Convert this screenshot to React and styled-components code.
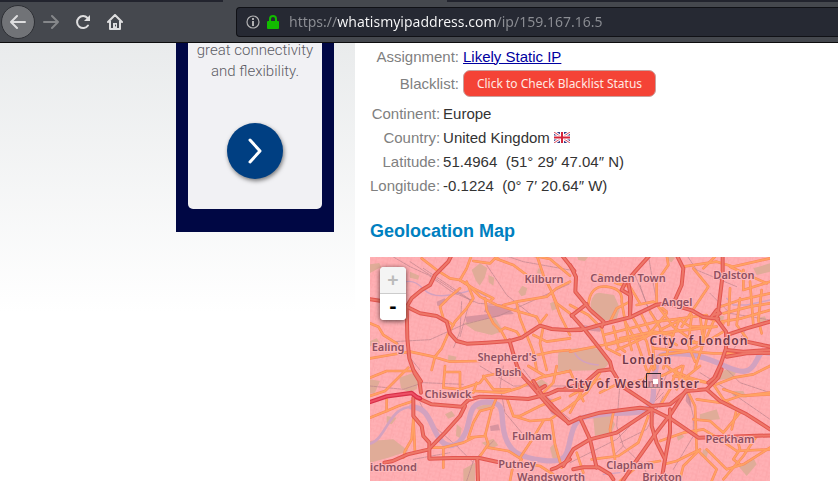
import React from "react";
import styled, { createGlobalStyle } from "styled-components";

const GlobalStyle = createGlobalStyle`
  * { box-sizing: border-box; }
  body {
    margin: 0;
    background: #fff;
    color: #333;
    font-family: "Liberation Sans", Arial, sans-serif;
    font-size: 15px;
  }
`;

const Window = styled.div`
  display: flex;
  flex-direction: column;
  height: 100vh;
  overflow: hidden;
`;

const TabStrip = styled.div`
  display: grid;
  grid-template-columns: 223px 224px 1fr;
  height: 2px;
  flex: none;
  background: #22242e;
`;

const ActiveTab = styled.div`
  grid-column: 2;
  background: #45484e;
`;

const Toolbar = styled.header`
  display: flex;
  align-items: center;
  flex: none;
  height: 41px;
  padding: 0 0 0 1px;
  background: #45484e;
  border-bottom: 1px solid #0c0c0d;
`;

const NavButtons = styled.nav`
  display: flex;
  align-items: center;
  width: 235px;
  flex: none;
`;

const ToolButton = styled.button`
  display: grid;
  place-items: center;
  width: 32px;
  height: 32px;
  padding: 0;
  border: 0;
  background: none;
  color: ${(p) => (p.disabled ? "#85878a" : "#dededf")};
`;

const BackButton = styled(ToolButton)`
  width: 34px;
  height: 34px;
  border: 1px solid #2d2f34;
  border-radius: 50%;
  background: #717377;
`;

const AddressBar = styled.div`
  display: flex;
  align-items: center;
  flex: 1;
  height: 30px;
  padding-left: 9px;
  border: 1px solid #101116;
  border-right: 0;
  border-radius: 4px 0 0 4px;
  background: #262933;
`;

const SiteInfo = styled.button`
  display: flex;
  align-items: center;
  gap: 7px;
  width: 43px;
  padding: 0;
  border: 0;
  background: none;
`;

const AddressInput = styled.input`
  flex: 1;
  min-width: 0;
  height: 26px;
  padding: 0;
  border: 0;
  outline: 0;
  font: 14px/26px "Noto Sans", sans-serif;
  color: transparent;
  background: linear-gradient(90deg, #8c8e94 48px, #f9f9fa 48px 207px, #8c8e94 207px);
  background-clip: text;
`;

const Page = styled.div`
  display: grid;
  grid-template-columns: 355px minmax(0, 1fr);
  flex: 1;
  min-height: 0;
  overflow: hidden;
`;

const Sidebar = styled.aside`
  padding-left: 176px;
  background: linear-gradient(#e9ebec, #fff 270px);
`;

const Banner = styled.div`
  width: 158px;
  padding: 0 12px 23px;
  background: #000744;
`;

const BannerCard = styled.div`
  display: flex;
  flex-direction: column;
  align-items: center;
  height: 166px;
  border-radius: 0 0 5px 5px;
  background: #f1f1f4;
`;

const BannerText = styled.p`
  width: 124px;
  margin: -3px 0 41px;
  color: #5c5c64;
  font: 300 15px/21px Roboto, sans-serif;
  text-align: center;
`;

const GoButton = styled.button`
  display: grid;
  place-items: center;
  width: 56px;
  height: 56px;
  padding: 0;
  border: 0;
  border-radius: 50%;
  background: #003f82;
  box-shadow: 1px 2px 4px rgba(0, 0, 0, 0.5);
`;

const Content = styled.main`
  display: flex;
  flex-direction: column;
  align-items: flex-start;
  padding: 0 15px;
`;

const Details = styled.table`
  border-collapse: collapse;
  margin-top: ${(p) => p.$top || 0}px;

  th, td { padding: 0; height: ${(p) => p.$row}px; line-height: 24px; }
  th {
    width: ${(p) => p.$label}px;
    color: #808080;
    font-weight: 400;
    text-align: right;
  }
  td { padding-left: ${(p) => p.$gap}px; white-space: pre; }
`;

const StaticLink = styled.a`
  color: #0000a0;
  text-decoration: underline;
`;

const BlacklistButton = styled.button`
  display: block;
  height: 27px;
  width: 193px;
  padding: 0;
  border: 1px solid #c9a19e;
  border-radius: 7px;
  background: #f44336;
  color: #ffe9e4;
  font: 12px/25px "Noto Sans", sans-serif;
`;

const Flag = styled.svg`
  width: 16px;
  height: 11px;
`;

const Heading = styled.h2`
  margin: 21px 0 14px;
  color: #0080c0;
  font-size: 18px;
  line-height: 24px;
`;

const MapFrame = styled.section`
  position: relative;
  width: 100%;
  max-width: 400px;
  flex: 1;
  min-height: 0;
  overflow: hidden;
  background: #ffacb1;
`;

const MapDrawing = styled.svg`
  display: block;
  width: 400px;
  height: 224px;
`;

const Labels = styled.g`
  font-family: "Noto Sans", sans-serif;
  font-size: ${(p) => (p.$major ? 12 : 11)}px;
  font-weight: 600;
  letter-spacing: ${(p) => (p.$major ? 1 : 0)}px;
  text-anchor: middle;
  fill: ${(p) => (p.$major ? "#703748" : "#8d5061")};
  stroke: #ffb9bb;
  stroke-width: 2px;
  paint-order: stroke;
`;

const ZoomControl = styled.div`
  position: absolute;
  top: 10px;
  left: 10px;
  display: flex;
  flex-direction: column;
  width: 26px;
  border-radius: 4px;
  background: #fff;
  box-shadow: 0 1px 5px rgba(0, 0, 0, 0.65);
  overflow: hidden;
`;

const ZoomButton = styled.button`
  height: ${(p) => (p.disabled ? 27 : 26)}px;
  padding: 0;
  border: 0;
  border-bottom: ${(p) => (p.disabled ? "1px solid #ccc" : "0")};
  background: ${(p) => (p.disabled ? "#f4f4f4" : "#fff")};
  color: ${(p) => (p.disabled ? "#bbb" : "#000")};
  font: bold 18px/26px "DejaVu Sans Mono", monospace;
`;

const THAMES =
  "M125 450C175 450 180 500 205 540S265 570 285 530 290 435 350 435 390 470 402 525 440 600 520 610 590 585 605 530 640 480 700 472 800 475 830 455 845 400 855 350 855 290 910 290 1000 298 1060 325 1140 350 1160 310 1180 290 1200 288";
const THAMES_WEST = "M0 560C50 545 55 450 125 450";

/* Map geometry, drawn in four tiles of 600 x 333 units. */
const TILES = [
  {
    at: "translate(0 -6)",
    green: [
      "M305 45l25-20 22 15-8 28-15 24-12-16z", "M282 205l28-12 65-5 25 40-35 12-50-12z",
      "M0 28l28-4 5 12-33 18z", "M445 110l12-18 15 8-6 20-12 4z", "M540 145l18-8 8 22-20 8z",
      "M565 292l35-4v57h-32z", "M120 50l28 12-4 12-24-6z", "M235 300l25 5-6 16-20-4z",
      "M355 60l18 8-3 24-14-10z", "M0 258l20-8 10 14-30 10z", "M505 40l12 3-4 14-12-3z",
    ],
    grey: ["M350 150l60 5 22 22-60 5-30-12z", "M200 140l24-10 8 10-18 14-12-2z", "M285 185l70-8 45 5-50 10-60 12z"],
    water: ["M110 80q25-5 50 22t80 18 60-15 50 20"],
    rail: [
      "M60 0l60 35 55 25 70 50 80 35 75 5", "M120 20l60 40 70 45 50 30", "M160 40l90 60 60 40", "M70 260l110-6 100-45 110-28 90-40 120-55",
      "M275 140l-5 90-20 50", "M400 0l60 20 140 25", "M300 135l-30 110", "M350 30l60 90 100 80", "M80 260l70 85",
    ],
    orange: [
      "M155 10l45 35 40 25 30 5 30 20 30 30 50 25 50 15 70 20 10 20", "M305 0l-15 40-20 35",
      "M290 80l20 50-20 30-35 40-20 35-20 45-20 25-10 40", "M270 100l-30 25-30 30 10 35 30 20",
      "M345 130l5 35 20 40 25 25 15 28", "M310 18l50 7 15-15 55 20 40 30", "M330 0l40 0 15 12",
      "M400 150l40-10 90-15 30-25 40-20", "M440 145l10 45 20 50 20 50 10 55",
      "M500 0l20 60 25 50 25 70 30 60", "M0 205l25 10 15 25 40 25", "M120 290l70 15 50 15 90-2",
      "M500 300l50-10 50-5", "M490 240l40 20 70-10", "M530 180l-20 25", "M390 228l15-10 35 12 10 15",
      "M520 215l-10 50 20 80", "M600 175l-40-30-15-35", "M480 0l60 12 60 50",
      "M270 75l40 25 60 30-10 8", "M0 310l60-10 60-10",
    ],
    red: [
      "M245 0l-10 20-40 40-15 30-25 15-30 25-15 25 2 95 6 60 12 35 13 19 10 15", "M0 133l50 7 60 15 40 20 50 8 30 17 10 35 20 23 30 8 60-3 70-5 35-10 35-23 20-13 35 10 55 4 35-1",
      "M418 256l10 34 12 40 10 24 5 6", "M575 0l38 48",
    ],
  },
  {
    at: "translate(600 -6)",
    green: [
      "M62 145q8-40 35-30l35 5 18 40-10 32-45 5-33-20z", "M-36 300l36-18 60-6 40 10 20 35-20 24-136 4z",
      "M550 40l50-15v25l-40 10z", "M20 0l35 4-10 14-20-3z", "M440 180l22 4-4 20-18-6z",
      "M295 0l20 8-10 14-15-6z", "M560 190l25-6 5 15-25 8z",
    ],
    grey: ["M40 210l60 10-10 10-50-5z"],
    water: ["M15 295q15 30 70 35", "M470 130l20 20 40 0 70-15"],
    rail: [
      "M210 90l20 60 40 60 20 80", "M195 60l45 110", "M235 0l10 60 15 80", "M600 195l-120-20-60-60",
      "M480 300l50-80 70-20", "M350 0l30 45 120 50",
    ],
    orange: [
      "M55 150q5-60 55-55t45 45l15 85 15 60", "M90 60l50 25 40 10 30 50", "M260 150l0-70 35-50-5-30",
      "M340 35l100-15 50 15 110-25", "M370 40l45 55-40 60-40 60", "M400 40l40-40", "M480 35l110 50",
      "M600 80l-80 25 0-60", "M450 155l60-20 90-20", "M460 175l80-20 60-10", "M455 200l60-10 85-25",
      "M480 100l-5 110", "M510 130l-10 80 30 40", "M540 80l10 130", "M575 105l-10 90 10 40",
      "M400 185l60 20", "M0 150l55 30 40 40 15 60 40 20", "M100 240l160-40 150-20",
      "M110 270l150-35 180-20", "M0 290l100-20 70-20", "M130 215l15 60 20 15", "M165 200l35 60 30 85",
      "M190 190l40 70 20 85", "M215 180l30 60 10 100", "M240 170l50 80 30 20", "M265 155l45 60 70 50",
      "M290 175l-60 70-90 40", "M330 190l-30 70-20 80", "M365 180l-10 90 20 50", "M390 180l10 80",
      "M410 190l-15 90-20 60", "M430 200l-30 70", "M250 280l180 15 170 0", "M270 300l80-10 40-20",
      "M460 230l-50 30-60 5", "M150 250l100-20 60 10", "M120 200l20-40 40-20",
      "M270 225l60-30 30 20 60 0", "M200 150l50-10 40 30",
    ],
    red: [
      "M0 30l18 36-2 44 45 55 40 35-5 15", "M240 0l-45 50-30 35-10 20 25 15 0 65",
      "M175 85l8 40-3 60", "M320 0l20 40-5 50-20 45", "M0 225l50-4 50-14 80-20 80-38 20-3 35 5 50 15 35 20 45 5",
      "M458 0l0 60-15 120-5 10 30 40 0 50-15 45-20 43-18 15", "M430 180l20-5-10-10-15 20", "M5 180l40 45 40 50 35 45 5 20 0 5",
      "M5 182l45-35", "M470 240l60-20 70-20", "M470 285l50 5 80-5", "M470 305l60-10 70-2", "M530 260l70 15",
    ],
  },
  {
    at: "translate(0 327)",
    green: [
      "M88 35l38-13 22 15-8 32-22 12-25-15z", "M0 225l70-5 45 35-60 20-55 15z", "M280 310l35-20v55h-35z",
      "M0 40l30 5-15 35-15 3z", "M225 145l20-10 10 15-20 8z", "M315 125l45-15 10 12-38 12z",
      "M335 230l35-12 15 20-25 12z", "M490 55l25-15 20 15-25 10z",
      "M540 245l15-15 10 60-15-5z", "M50 150l30 5-15 20-15-5z", "M260 175l15 12-5 30-12-8z",
    ],
    grey: ["M515 85l30 15 20 50-20-5z", "M360 180l25-5 5 18-28 2z"],
    water: [],
    rail: [
      "M150 110l30 60 80 70 50 50", "M0 60l100 10 60-20 120 5", "M400 0l-10 60 15 80 50 60", "M460 10l70 90 70 60",
      "M290 345l20-60 60-60", "M330 0l100 60 170 0", "M130 280l110-20",
    ],
    orange: [
      "M0 35l50-20 75 0", "M0 90l45-15 30-30 40-40", "M0 155l50-20 35-15 45-15", "M50 95l0 40",
      "M225 0l-5 65 50 5 60-20 15-20 100-20", "M225 18l45 0 0 45", "M310 75l90 5 50-15 60-30 90-20",
      "M340 30l30 40 50 0", "M320 50l-10 30", "M380 95l-15 35-20 80-50 5 15-45 20-35 40-10",
      "M345 205l10 30-35 50", "M180 245l40 0 60-15 30-15", "M130 160l-5 60-20 35-5 20",
      "M130 150l5 110", "M220 245l0 60", "M355 245l60 10 40 25-15 20",
      "M410 95l20 55 50 15 60-5 60-40", "M430 150l20 0 60-30 60-25", "M545 165l10 70 20 70",
      "M520 165l-30 50-40 60", "M560 0l-10 50-40 40", "M475 0l50 30 75-15",
      "M420 345l10-50", "M450 290l60 10 40 25",
    ],
    red: [
      "M133 20l15 25 5 35", "M140 95l45 20 90 7 20-20 35-10 60 2 85 5 60-15 30-13 75 0",
      "M285 120l-15 30-45 50-47 48 0 30 70-2 80 0 55 12", "M130 95l0 55 25 30 5 30 18 20 0 20-65 15-45 20-25 5",
      "M322 280l2 65", "M455 27l30 33 60 70 50 40", "M490 45l25 40 80 85", "M500 75l25-15", "M545 310l15-5 40 -25",
    ],
    crimson: ["M0 108l50-17 75-10 15 12 10 4"],
  },
  {
    at: "translate(600 327)",
    green: [
      "M70 155l50-10 15 30-10 25-50 10z", "M390 145l50-15 10 30-60 5z", "M505 300l45-25 10 20-30 35z",
      "M430 30l40-20 30 5-10 20-60 10z", "M320 212l15-8 8 8-18 12z", "M480 75l40 0 10 20-40-5z",
      "M400 250l15 5-5 20-15-5z", "M100 145l20-10 20 10-30 8z",
    ],
    grey: ["M350 75l12 10 0 40-15-20z"],
    water: ["M100 325l50-5"],
    rail: [
      "M250 110l30-60 20-50", "M150 50l-10 130 20 60-30 30", "M0 290l140-70 80-80 60-60", "M390 20l80 50 130 90",
      "M350 70l20 80 0 60-60 100", "M160 240l60 60 20 45", "M280 90l-50 100-80 40", "M600 80l-90-30-40-40",
    ],
    orange: [
      "M0 120l50-40 40-60", "M50 50l-50 90", "M90 80l60-30 70 5",
      "M130 140l-10 50 15 90", "M235 150l-30 80-60 40-80 10", "M270 225l70-25 60-10 50 30 50 35 100-5",
      "M355 80l20 40 5 130 60 60-15 35", "M380 100l70 10 60-20 90-10", "M370 160l50 5 40 35 50-60",
      "M300 10l60 25 70 20 30 45 40 30-15 60", "M340 0l-20 70", "M440 55l50-20 60-10 50-25",
      "M460 70l60 20 80-5", "M390 250l-50 50-10 40", "M410 250l60 60 50-15 80-50", "M500 215l10 35-20 30 20 15",
      "M380 255l-60 30-40 10", "M560 210l-40 60-60 70", "M245 0l-20 40-80 20", "M275 30l60-30", "M390 0l-50 40",
      "M310 30l100 20", "M290 0l80 60", "M20 260l20 60", "M270 120l30-50 20-60",
      "M0 90l90-50", "M0 15l40 90", "M150 345l60-50 60-10",
    ],
    red: [
      "M-15 68l60-18 40-35 40-5", "M125 10l30 50 60 40 30 20 55-5 50-40 60-5 35-35 10-25",
      "M-5 172l30-14 65-18 120-15 35 5", "M245 130l0 50 15 50 25 50-10 60", "M245 130l60 30 80 55 220-7",
      "M350 70l-45 70-50 65-60 85-40 60", "M300 130l0 70-15 80", "M410 70l40 35 80 40 70 45",
      "M-20 300l30-50 50-30 80-20 60-40 45-30", "M30 155l30 65 20 85", "M10 310l30-6 45 0 35 21 10 15",
    ],
  },
];

const PLACES = [
  [174, 26, "Kilburn"], [258, 25, "Camden Town"], [364, 22, "Dalston"], [307, 49, "Angel"],
  [18, 94, "Ealing"], [137, 104, "Shepherd's"], [138, 119, "Bush"], [78, 141, "Chiswick"],
  [162, 183, "Fulham"], [360, 186, "Peckham"], [147, 211, "Putney"], [20, 214, "Richmond"],
  [181, 224, "Wandsworth"], [260, 212, "Clapham"], [292, 224, "Brixton"],
];
const CITIES = [[329, 88, "City of London"], [277, 107, "London"], [263, 131, "City of Westminster"]];

const Lines = ({ paths, ...rest }) => (
  <g fill="none" strokeLinejoin="round" strokeLinecap="round" {...rest}>
    {paths.map((d) => <path key={d} d={d} />)}
  </g>
);

const eachTile = (render) => TILES.map((t) => <g key={t.at} transform={t.at}>{render(t)}</g>);

const LondonMap = () => (
  <MapDrawing role="img" aria-label="Map of London">
    <defs>
      <pattern id="streets" width="34" height="30" patternUnits="userSpaceOnUse" patternTransform="rotate(14)">
        <path d="M0 6h18l4 12h12M8 0v18l-8 6M20 0v30M0 24h20M27 18v12M20 9h14" fill="none" stroke="#f9a0a5" strokeWidth="1.5" />
      </pattern>
    </defs>
    <svg width="400" height="224" viewBox="0 0 1200 672">
      <rect width="1200" height="672" fill="#ffb0b4" />
      <rect width="1200" height="672" fill="url(#streets)" />
      {eachTile((t) => (
        <>
          <g fill="#e0ac98">{t.green.map((d) => <path key={d} d={d} />)}</g>
          <g fill="#d8949f">{t.grey.map((d) => <path key={d} d={d} />)}</g>
          <Lines paths={t.water} stroke="#d3a1bf" strokeWidth="4" />
          <Lines paths={t.rail} stroke="#b9828b" strokeWidth="2" strokeDasharray="9 3" />
        </>
      ))}
      <Lines paths={[THAMES]} stroke="#d3a2bf" strokeWidth="16" />
      <Lines paths={[THAMES_WEST]} stroke="#d3a2bf" strokeWidth="8" />
      {eachTile((t) => (
        <>
          <Lines paths={t.orange} stroke="#fb875a" strokeWidth="8" />
          <Lines paths={t.orange} stroke="#ffa264" strokeWidth="5" />
        </>
      ))}
      {eachTile((t) => <Lines paths={t.red} stroke="#e2554f" strokeWidth="12" />)}
      {eachTile((t) => (
        <>
          <Lines paths={t.red} stroke="#ee7769" strokeWidth="6" />
          <Lines paths={t.crimson || []} stroke="#d82f48" strokeWidth="13" />
          <Lines paths={t.crimson || []} stroke="#ed5065" strokeWidth="6" />
        </>
      ))}
    </svg>
    <Labels>{PLACES.map(([x, y, name]) => <text key={name} x={x} y={y}>{name}</text>)}</Labels>
    <Labels $major>{CITIES.map(([x, y, name]) => <text key={name} x={x} y={y}>{name}</text>)}</Labels>
    <rect x="277" y="117" width="14" height="14" fill="#d998a5" fillOpacity=".55" />
    <path d="M276.500 131V116.500H291" fill="none" stroke="#30282c" />
    <path d="M277 130.500h13.500V117" fill="none" stroke="#a58186" />
    <rect x="283" y="122" width="5" height="5" fill="#fff" />
  </MapDrawing>
);

const LINE = { fill: "none", stroke: "currentColor", strokeWidth: 2, strokeLinecap: "round", strokeLinejoin: "round" };

export default function App() {
  return (
    <Window>
      <GlobalStyle />
      <TabStrip><ActiveTab /></TabStrip>
      <Toolbar>
        <NavButtons aria-label="Browser">
          <BackButton aria-label="Back">
            <svg width="16" height="16" {...LINE}><path d="M15 8H1M7 2L1 8l6 6" /></svg>
          </BackButton>
          <ToolButton aria-label="Forward" disabled>
            <svg width="16" height="16" {...LINE}><path d="M1 8h14M9 2l6 6-6 6" /></svg>
          </ToolButton>
          <ToolButton aria-label="Reload">
            <svg width="16" height="16" {...LINE}>
              <path d="M13 11.500A6 6 0 1 1 12.500 4" />
              <path d="M15 1v6H9z" fill="currentColor" stroke="none" />
            </svg>
          </ToolButton>
          <ToolButton aria-label="Home">
            <svg width="16" height="16" {...LINE}>
              <path d="M1 8l7-7 7 7M3 7v8h10V7" />
              <path d="M6 15V9h4v6z" fill="currentColor" stroke="none" />
              <path d="M8.500 11v1" stroke="#45484e" strokeWidth="1" />
            </svg>
          </ToolButton>
        </NavButtons>
        <AddressBar>
          <SiteInfo aria-label="Site information">
            <svg width="14" height="14" fill="none" stroke="#b1b1b3">
              <circle cx="7" cy="7" r="6" strokeWidth="1.200" />
              <path d="M7 6v5M7 3v2" strokeWidth="2" />
            </svg>
            <svg width="12" height="14">
              <path d="M3 7V4a3 3 0 0 1 6 0v3" fill="none" stroke="#12bc00" strokeWidth="2" />
              <rect y="6" width="12" height="8" rx="1" fill="#12bc00" />
            </svg>
          </SiteInfo>
          <AddressInput aria-label="Address" defaultValue="https://whatismyipaddress.com/ip/159.167.16.5" />
        </AddressBar>
      </Toolbar>
      <Page>
        <Sidebar>
          <Banner>
            <BannerCard>
              <BannerText>great connectivity and flexibility.</BannerText>
              <GoButton aria-label="Learn more">
                <svg width="14" height="26" fill="none" stroke="#fff" strokeWidth="3" strokeLinecap="round" strokeLinejoin="round">
                  <path d="M2 2l10 11L2 24" />
                </svg>
              </GoButton>
            </BannerCard>
          </Banner>
        </Sidebar>
        <Content>
          <Details $label={89} $row={27} $gap={4}>
            <tbody>
              <tr><th scope="row">Assignment:</th><td><StaticLink href="#static">Likely Static IP</StaticLink></td></tr>
              <tr><th scope="row">Blacklist:</th><td><BlacklistButton>Click to Check Blacklist Status</BlacklistButton></td></tr>
            </tbody>
          </Details>
          <Details $label={69} $row={24} $top={5} $gap={3}>
            <tbody>
              <tr><th scope="row">Continent:</th><td>Europe</td></tr>
              <tr>
                <th scope="row">Country:</th>
                <td>
                  {"United Kingdom "}
                  <Flag viewBox="0 0 16 11" role="img" aria-label="United Kingdom flag">
                    <rect width="16" height="11" fill="#31408c" />
                    <path d="M0 0l16 11M16 0L0 11" stroke="#fff" strokeWidth="3" />
                    <path d="M0 0l16 11M16 0L0 11" stroke="#d8465a" strokeWidth="1" />
                    <path d="M8 0v11M0 5.500h16" stroke="#fff" strokeWidth="4" />
                    <path d="M8 0v11M0 5.500h16" stroke="#d5233b" strokeWidth="2" />
                  </Flag>
                </td>
              </tr>
              <tr><th scope="row">Latitude:</th><td>{"51.4964  (51° 29′ 47.04″ N)"}</td></tr>
              <tr><th scope="row">Longitude:</th><td>{"-0.1224  (0° 7′ 20.64″ W)"}</td></tr>
            </tbody>
          </Details>
          <Heading>Geolocation Map</Heading>
          <MapFrame>
            <LondonMap />
            <ZoomControl>
              <ZoomButton aria-label="Zoom in" disabled>+</ZoomButton>
              <ZoomButton aria-label="Zoom out">-</ZoomButton>
            </ZoomControl>
          </MapFrame>
        </Content>
      </Page>
    </Window>
  );
}
